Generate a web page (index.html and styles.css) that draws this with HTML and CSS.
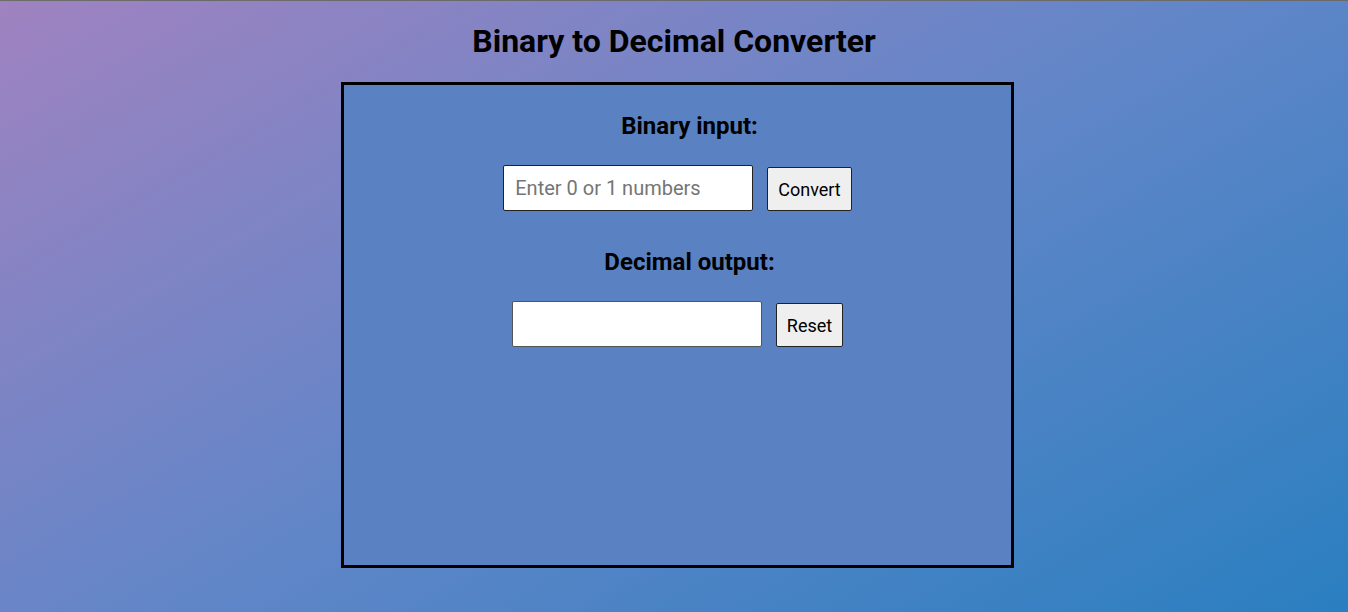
FILE: index.html
```html
<!DOCTYPE html>
<html lang="en">
<head>
<meta charset="utf-8">
<title>Binary to Decimal Converter</title>
<link rel="stylesheet" href="styles.css">
</head>
<body>
<h1 class="title">Binary to Decimal Converter</h1>
<div class="stage">
  <div class="card">
    <h2 class="label">Binary input:</h2>
    <div class="row">
      <input class="field" type="text" placeholder="Enter 0 or 1 numbers">
      <button class="btn">Convert</button>
    </div>
    <h2 class="label">Decimal output:</h2>
    <div class="row">
      <input class="field" type="text">
      <button class="btn">Reset</button>
    </div>
  </div>
</div>
</body>
</html>
```

FILE: styles.css
```css
html, body {
  margin: 0;
  padding: 0;
}
body {
  height: 612px;
  box-sizing: border-box;
  border-top: 1px solid #6b6b6b;
  background: linear-gradient(150deg, #a082c0 0%, #6286c8 50%, #2a7fc0 100%);
  font-family: Roboto, "Liberation Sans", sans-serif;
  color: #000;
  overflow: hidden;
}
.title {
  margin: 0;
  padding-top: 21px;
  height: 57px;
  box-sizing: border-box;
  text-align: center;
  font-size: 32px;
  font-weight: 700;
  line-height: 38px;
}
.stage {
  display: flex;
  justify-content: center;
  padding-left: 7px;
  padding-top: 24px;
}
.card {
  width: 667px;
  height: 480px;
  border: 3px solid #000;
  background: #5a82c2;
  display: flex;
  flex-direction: column;
  align-items: center;
}
.label {
  margin: 37px 0 0;
  padding-left: 24px;
  font-size: 24px;
  font-weight: 700;
  line-height: 28px;
  text-align: center;
}
.card .label:first-child {
  margin-top: 27px;
}
.row {
  display: flex;
  align-items: flex-start;
  gap: 14px;
  margin-top: 25px;
  height: 46px;
}
.field {
  width: 250px;
  height: 46px;
  box-sizing: border-box;
  border: 1px solid #222;
  border-radius: 2px;
  background: #fff;
  padding: 0 11px;
  font-family: Roboto, "Liberation Sans", sans-serif;
  font-size: 20px;
  color: #000;
  margin: 0;
}
.row:last-child .field {
  border-color: #555;
}
.field::placeholder {
  color: #757575;
}
.btn {
  height: 44px;
  box-sizing: border-box;
  border: 1px solid #222;
  border-radius: 2px;
  background: #efefef;
  padding: 0 10px;
  font-family: Roboto, "Liberation Sans", sans-serif;
  font-size: 18px;
  color: #000;
  margin: 2px 0 0;
}
```
